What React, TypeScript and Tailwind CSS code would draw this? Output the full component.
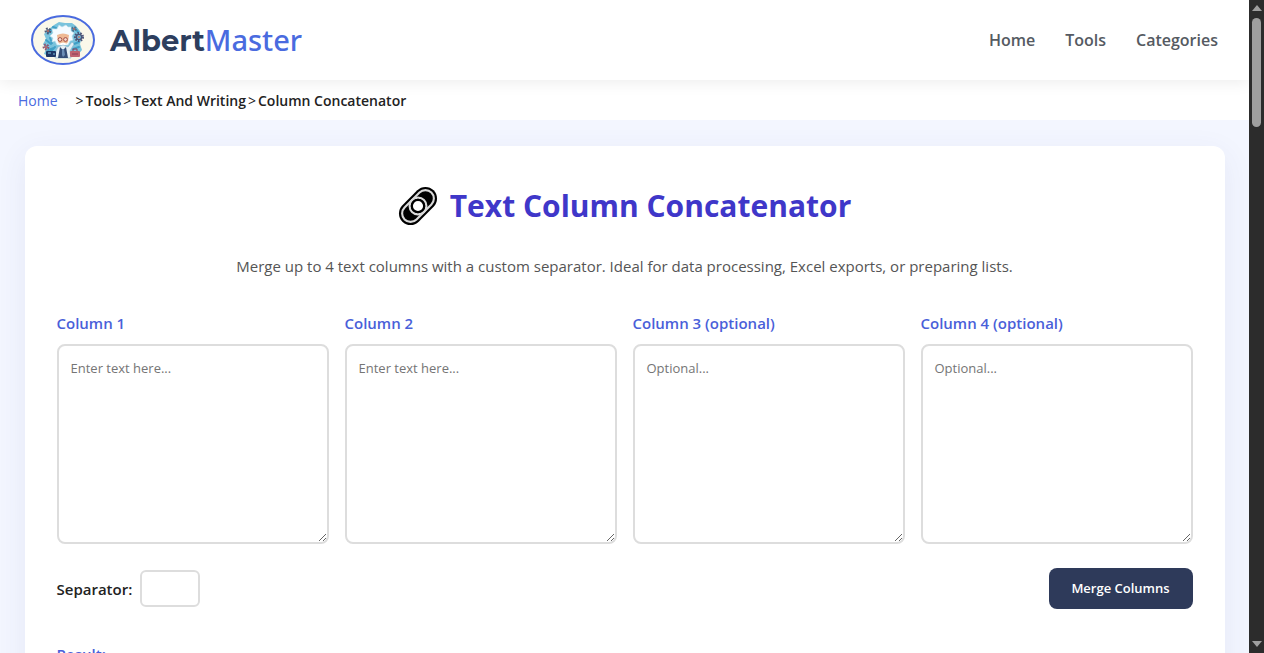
import { useState } from 'react';

const navLinks = ['Home', 'Tools', 'Categories'];

const crumbs = ['Tools', 'Text And Writing', 'Column Concatenator'];

const columns = [
  { id: 'col1', label: 'Column 1', placeholder: 'Enter text here...' },
  { id: 'col2', label: 'Column 2', placeholder: 'Enter text here...' },
  { id: 'col3', label: 'Column 3 (optional)', placeholder: 'Optional...' },
  { id: 'col4', label: 'Column 4 (optional)', placeholder: 'Optional...' },
];

function Gear({ x, y, r, color }: { x: number; y: number; r: number; color: string }) {
  return (
    <g transform={`translate(${x} ${y})`} fill="none" stroke={color}>
      <circle r={r} strokeWidth="2" strokeDasharray="1.6 1.2" />
      <circle r={r - 1.4} strokeWidth="1.4" />
      <circle r="0.9" fill="#c9705f" stroke="none" />
    </g>
  );
}

function Logo() {
  return (
    <svg viewBox="0 0 64 50" className="h-[50px] w-16" aria-hidden="true">
      <ellipse cx="32" cy="25" rx="31" ry="24" fill="#faf8ea" stroke="#4a6bdf" strokeWidth="2" />
      {/* Blue splash */}
      <path
        d="M18 14 L23 10 L28 7 L34 8 L41 8 L45 11 L49 16 L51 22 L49 29 L51 35 L46 41 L20 42 L13 39 L15 34 L12 29 L15 24 L13 19 Z"
        fill="#79c3dc"
      />
      <path
        d="M17 18 L20 15 M15 25 L20 29 M17 35 L23 33 M44 13 L47 17 M43 29 L48 27 M42 34 L48 32 M22 12 L25 13 M19 23 L21 28 M24 32 L20 36 M40 13 L42 16"
        stroke="#3f9fc6"
        strokeWidth="2"
        strokeLinecap="round"
      />
      <Gear x={17} y={16} r={2.4} color="#4c5875" />
      <Gear x={43} y={14} r={1.9} color="#53718a" />
      <Gear x={48} y={22} r={4} color="#4b5377" />
      <Gear x={15} y={32} r={2.4} color="#8a5876" />
      {/* Hair */}
      <path
        d="M24 26 L21 27 L22 23 L19 21 L22 18 L21 14 L26 14 L28 10 L31 12 L35 10 L37 12 L40 12 L40 16 L43 18 L41 21 L42 25 L39 26 L37 30 L26 30 Z"
        fill="#f4fbff"
        stroke="#c5e0ea"
        strokeWidth="0.6"
      />
      <path d="M26 20 Q32 17 38 20 L37 27 Q32 34 27 27 Z" fill="#eeb993" />
      <path d="M28 29 Q32 26 36 29 Q32 32 28 29" fill="#fff" />
      <g fill="#f3dccb" stroke="#9c3f3c" strokeWidth="0.9">
        <circle cx="29" cy="24.5" r="1.9" />
        <circle cx="34.5" cy="24.5" r="1.9" />
      </g>
      {/* Coat and desk */}
      <path d="M27 32 L32 30 L37 32 L41 27 L43 29 L39 36 L40 43 H24 L25 36 Z" fill="#e6eff4" stroke="#8bb4c9" strokeWidth="0.6" />
      <path d="M29 32 L32 35 L35 32 L37 43 H27 Z" fill="#344d77" />
      <path d="M31 34 H33 L34 40 L32 42 L31 40 Z" fill="#6b8db6" />
      <rect x="15" y="36" width="10" height="6" rx="1" fill="#1e3766" />
      <path d="M17 38 H20 M22 39 H24" stroke="#7dc3de" />
      <rect x="39" y="36" width="10" height="6" rx="1" fill="#bf6470" />
      <path d="M42 36 V34 H46 V36 M41 39 H47" stroke="#8a3f57" fill="none" />
    </svg>
  );
}

function LinkIcon() {
  return (
    <svg viewBox="0 0 38 38" className="h-10 w-10" aria-hidden="true">
      <g transform="rotate(-45 19 19)">
        <rect x="-2" y="8" width="42" height="22" rx="11" fill="#000" />
        <g fill="none" stroke="#dadada" strokeWidth="2">
          <rect x="1" y="11" width="26" height="16" rx="8" />
          <rect x="11" y="11" width="26" height="16" rx="8" />
        </g>
        <circle cx="19" cy="19" r="5.8" fill="#fff" stroke="#000" strokeWidth="2" />
      </g>
    </svg>
  );
}

function Header() {
  return (
    <header className="relative z-10 flex h-20 items-center justify-between bg-white pr-[31px] pl-[31px] shadow-[0_2px_15px_rgba(0,0,0,0.08)]">
      <a href="#" className="flex items-center gap-[15px]">
        <Logo />
        <span className="font-['Montserrat','Open_Sans',sans-serif] text-[29px] leading-9 font-bold text-[#2d3e5e]">
          Albert<span className="font-['Noto_Sans',sans-serif] font-medium text-[#4a6bdf]">Master</span>
        </span>
      </a>
      <nav className="flex gap-[30px] font-['Open_Sans',sans-serif] text-base font-semibold text-[#555a62]">
        {navLinks.map((link) => (
          <a key={link} href="#" className="hover:text-[#4a6bdf]">
            {link}
          </a>
        ))}
      </nav>
    </header>
  );
}

function Breadcrumb() {
  return (
    <nav aria-label="Breadcrumb" className="flex h-10 items-center bg-white pt-[2px] pl-[18px] text-sm text-[#222]">
      <a href="#" className="mr-4 text-[#4a6bdf]">
        Home
      </a>
      {crumbs.map((crumb) => (
        <span key={crumb} className="font-semibold">
          <span className="mx-[2px] font-normal">&gt;</span>
          {crumb}
        </span>
      ))}
    </nav>
  );
}

function Scrollbar() {
  return (
    <div className="flex w-[15px] shrink-0 flex-col items-center justify-between bg-[#2c2c2c] pt-[5px] pb-[6px]" aria-hidden="true">
      <div className="flex flex-col items-center gap-[7px]">
        <svg viewBox="0 0 10 6" className="h-[6px] w-[10px] fill-[#9f9f9f]">
          <path d="M0 6 L5 0 L10 6 Z" />
        </svg>
        <div className="h-[109px] w-[9px] rounded-full bg-[#9f9f9f]" />
      </div>
      <svg viewBox="0 0 10 6" className="h-[6px] w-[10px] fill-[#9f9f9f]">
        <path d="M0 0 L5 6 L10 0 Z" />
      </svg>
    </div>
  );
}

export default function App() {
  const [values, setValues] = useState<Record<string, string>>({});
  const [separator, setSeparator] = useState(' ');
  const [result, setResult] = useState('');

  const merge = () => {
    const lines = columns.map((c) => (values[c.id] ? values[c.id].split('\n') : []));
    const count = Math.max(...lines.map((l) => l.length));
    const rows = Array.from({ length: count }, (_, i) =>
      lines.map((l) => l[i]).filter(Boolean).join(separator)
    );
    setResult(rows.join('\n'));
  };

  return (
    <div className="flex h-screen font-['Segoe_UI','Open_Sans',sans-serif]">
      <div className="min-w-0 flex-1 overflow-x-hidden overflow-y-auto bg-[#f3f6ff] [scrollbar-width:none]">
        <Header />
        <Breadcrumb />
        <main className="mx-auto mt-[26px] max-w-[1200px] rounded-xl bg-white p-8 shadow-[0_8px_30px_rgba(60,70,140,0.08)]">
          <h1 className="mt-2 flex items-center justify-center gap-3 text-[30px] leading-10 font-bold text-[#3f37c9]">
            <LinkIcon />
            Text Column Concatenator
          </h1>
          <p className="mt-7 text-center text-[15px] leading-6 text-[#555]">
            Merge up to 4 text columns with a custom separator. Ideal for data processing, Excel exports, or preparing
            lists.
          </p>

          <div className="mt-8 grid grid-cols-4 gap-4">
            {columns.map((col) => (
              <div key={col.id} className="flex flex-col gap-2">
                <label htmlFor={col.id} className="text-[15px] leading-[26px] font-semibold text-[#4a5fd9]">
                  {col.label}
                </label>
                <textarea
                  id={col.id}
                  placeholder={col.placeholder}
                  value={values[col.id] ?? ''}
                  onChange={(e) => setValues({ ...values, [col.id]: e.target.value })}
                  className="h-[200px] resize-y rounded-lg border-2 border-[#ddd] p-3 text-[13px] leading-5 placeholder:text-[#757575]"
                />
              </div>
            ))}
          </div>

          <div className="mt-6 flex items-center justify-between">
            <div className="flex items-center gap-2">
              <label htmlFor="separator" className="text-[15px] leading-[26px] font-semibold text-[#222]">
                Separator:
              </label>
              <input
                id="separator"
                type="text"
                value={separator}
                onChange={(e) => setSeparator(e.target.value)}
                className="h-[37px] w-[60px] rounded-md border-2 border-[#ddd] px-2 text-center text-[13px]"
              />
            </div>
            <button
              type="button"
              onClick={merge}
              className="h-[41px] w-36 rounded-lg bg-[#2e3a5a] text-[13px] font-semibold text-white hover:bg-[#3f37c9]"
            >
              Merge Columns
            </button>
          </div>

          <div className="mt-8 flex flex-col gap-2">
            <label htmlFor="result" className="text-[15px] leading-[26px] font-semibold text-[#4a5fd9]">
              Result:
            </label>
            <textarea
              id="result"
              readOnly
              value={result}
              className="h-[200px] resize-y rounded-lg border-2 border-[#ddd] p-3 text-[13px] leading-5"
            />
          </div>
        </main>
      </div>
      <Scrollbar />
    </div>
  );
}
